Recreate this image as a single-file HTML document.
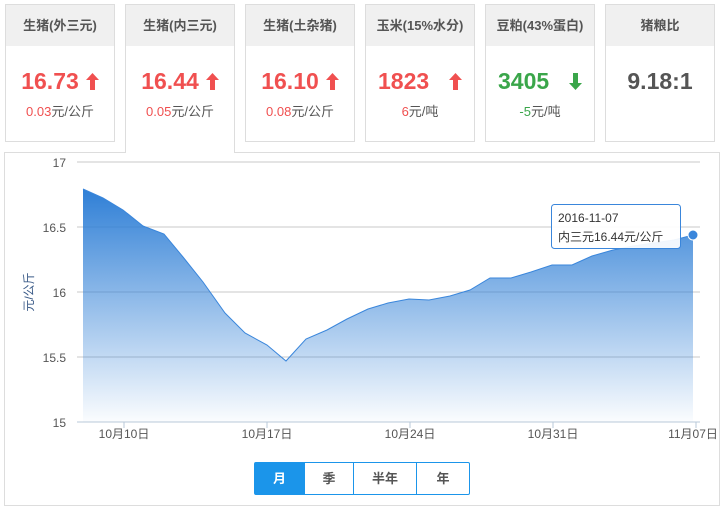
<!DOCTYPE html>
<html><head><meta charset="utf-8"><style>
*{box-sizing:border-box;margin:0;padding:0}
body{width:725px;height:513px;background:#fff;font-family:"Liberation Sans","Noto Sans CJK SC",sans-serif;position:relative;overflow:hidden}
.card{position:absolute;top:4px;width:110px;height:138px;border:1px solid #ddd;background:#fff;text-align:center}
.card.act{height:149px;border-bottom:none;z-index:2}
.hd{height:41px;background:#f0f0f0;line-height:41px;font-size:13px;font-weight:bold;color:#555}
.v{margin-top:21px;font-size:23px;font-weight:bold;line-height:28px}
.v svg{vertical-align:-1px;margin-left:7px}
.s{margin-top:6px;font-size:13px;color:#555}
.r{color:#f05050}.g{color:#3aa64a}
.panel{position:absolute;left:4px;top:152px;width:716px;height:354px;border:1px solid #ddd;background:#fff;z-index:1}
.btns{position:absolute;left:254px;top:462px;height:33px;display:flex;border:1px solid #1b95ea;border-radius:2px;z-index:3;background:#fff}
.btns div{height:31px;line-height:31px;text-align:center;font-size:13px;font-weight:bold;color:#555;border-left:1px solid #1b95ea}
.btns div:first-child{border-left:none;background:#1b95ea;color:#fff}
</style></head><body>
<div class="card" style="left:5px"><div class="hd">生猪(外三元)</div><div class="v r">16.73<svg width="13" height="17" viewBox="0 0 13 17"><path d="M6.5 0L13 7H9V17H4V7H0Z" fill="#f05050"/></svg></div><div class="s"><span class="r">0.03</span>元/公斤</div></div>
<div class="card act" style="left:125px"><div class="hd">生猪(内三元)</div><div class="v r">16.44<svg width="13" height="17" viewBox="0 0 13 17"><path d="M6.5 0L13 7H9V17H4V7H0Z" fill="#f05050"/></svg></div><div class="s"><span class="r">0.05</span>元/公斤</div></div>
<div class="card" style="left:245px"><div class="hd">生猪(土杂猪)</div><div class="v r">16.10<svg width="13" height="17" viewBox="0 0 13 17"><path d="M6.5 0L13 7H9V17H4V7H0Z" fill="#f05050"/></svg></div><div class="s"><span class="r">0.08</span>元/公斤</div></div>
<div class="card" style="left:365px"><div class="hd">玉米(15%水分)</div><div class="v r">1823 &nbsp;<svg width="13" height="17" viewBox="0 0 13 17"><path d="M6.5 0L13 7H9V17H4V7H0Z" fill="#f05050"/></svg></div><div class="s"><span class="r">6</span>元/吨</div></div>
<div class="card" style="left:485px"><div class="hd">豆粕(43%蛋白)</div><div class="v g">3405 &nbsp;<svg width="13" height="17" viewBox="0 0 13 17"><path d="M6.5 17L13 10H9V0H4V10H0Z" fill="#3aa64a"/></svg></div><div class="s"><span class="g">-5</span>元/吨</div></div>
<div class="card" style="left:605px"><div class="hd">猪粮比</div><div class="v" style="color:#555">9.18:1</div></div>
<div class="panel"></div>
<svg width="725" height="513" style="position:absolute;left:0;top:0;z-index:2" font-family="Liberation Sans,Noto Sans CJK SC,sans-serif">
<defs><linearGradient id="gr" x1="0" y1="0" x2="0" y2="1"><stop offset="0" stop-color="#2f7fd6"/><stop offset="1" stop-color="#2f7fd6" stop-opacity="0.02"/></linearGradient></defs>
<g stroke="#c8c8c8"><line x1="77" y1="162" x2="700" y2="162"/><line x1="77" y1="227" x2="700" y2="227"/><line x1="77" y1="292" x2="700" y2="292"/><line x1="77" y1="357" x2="700" y2="357"/></g>
<path fill="url(#gr)" stroke="none" d="M83,422 L83,189 L103,198 L123,210 L143,226 L164,234 L183,257 L203,282 L225,313 L245,333 L267,345 L286,361 L306,339 L327,330 L347,319 L368,309 L388,303 L409,299 L429,300 L450,296 L470,290 L490,278 L511,278 L531,272 L552,265 L572,265 L592,256 L613,250 L633,246 L654,243 L674,240 L693,235 L693,422 Z"/>
<path fill="none" stroke="#3a86db" stroke-width="1" d="M83,189 L103,198 L123,210 L143,226 L164,234 L183,257 L203,282 L225,313 L245,333 L267,345 L286,361 L306,339 L327,330 L347,319 L368,309 L388,303 L409,299 L429,300 L450,296 L470,290 L490,278 L511,278 L531,272 L552,265 L572,265 L592,256 L613,250 L633,246 L654,243 L674,240 L693,235"/>
<line x1="77" y1="422" x2="700" y2="422" stroke="#b8c8d8"/>
<g stroke="#b8c8d8"><line x1="124" y1="422" x2="124" y2="428"/><line x1="267" y1="422" x2="267" y2="428"/><line x1="410" y1="422" x2="410" y2="428"/><line x1="553" y1="422" x2="553" y2="428"/><line x1="696" y1="422" x2="696" y2="428"/></g>
<g font-size="12" fill="#555" text-anchor="end"><text x="66" y="167">17</text><text x="66" y="232">16.5</text><text x="66" y="297">16</text><text x="66" y="362">15.5</text><text x="66" y="427">15</text></g>
<g font-size="12" fill="#555" text-anchor="middle"><text x="124" y="438">10月10日</text><text x="267" y="438">10月17日</text><text x="410" y="438">10月24日</text><text x="553" y="438">10月31日</text><text x="693" y="438">11月07日</text></g>
<text transform="translate(33,292) rotate(-90)" font-size="12" fill="#3b5b88" text-anchor="middle">元/公斤</text>
<rect x="551.5" y="204.5" width="129" height="44" rx="3" fill="#fff" fill-opacity="0.92" stroke="#3a86db"/>
<text x="558" y="222" font-size="12" fill="#333">2016-11-07</text>
<text x="558" y="241" font-size="12" fill="#333">内三元16.44元/公斤</text>
<circle cx="693" cy="235" r="5" fill="#3a86db" stroke="#fff" stroke-width="1"/>
</svg>
<div class="btns"><div style="width:49px">月</div><div style="width:49px">季</div><div style="width:63px">半年</div><div style="width:53px">年</div></div>
</body></html>
